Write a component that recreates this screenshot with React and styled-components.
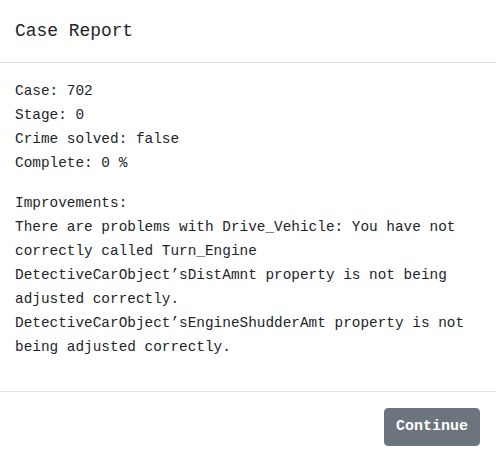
import React from "react";
import styled, { createGlobalStyle } from "styled-components";

const Global = createGlobalStyle`
  html, body { margin: 0; padding: 0; background: #fff; }
  body {
    font-family: "Liberation Mono", "Courier New", monospace;
    color: #212529;
    -webkit-font-smoothing: antialiased;
  }
  * { box-sizing: border-box; }
`;

const Modal = styled.div`
  width: 496px;
  background: #fff;
  display: flex;
  flex-direction: column;
`;

const Header = styled.div`
  padding: 16px 15px;
  border-bottom: 1px solid #dee2e6;
  display: flex;
  align-items: center;
`;

const Title = styled.h5`
  margin: 0;
  font-size: 17.9px;
  line-height: 30px;
  font-weight: 400;
  color: #212529;
`;

const Body = styled.div`
  padding: 16px 15px;
`;

const Para = styled.p`
  margin: 0 0 16px;
  font-size: 14.4px;
  line-height: 24px;
  color: #212529;
`;

const Line = styled.span`
  display: block;
`;

const Footer = styled.div`
  border-top: 1px solid #dee2e6;
  padding: 12px;
  display: flex;
  justify-content: flex-end;
`;

const Button = styled.button`
  margin: 4px;
  width: 96px;
  height: 38px;
  border: 1px solid #6c757d;
  border-radius: 4px;
  background: #6c757d;
  color: #fff;
  font-family: "Liberation Mono", "Courier New", monospace;
  font-size: 15px;
  font-weight: 700;
  line-height: 24px;
  padding: 0;
  cursor: pointer;
`;

export default function App() {
  return (
    <>
      <Global />
      <Modal>
        <Header>
          <Title>Case Report</Title>
        </Header>
        <Body>
          <Para>
            <Line>Case: 702</Line>
            <Line>Stage: 0</Line>
            <Line>Crime solved: false</Line>
            <Line>Complete: 0 %</Line>
          </Para>
          <Para>
            <Line>Improvements:</Line>
            <Line>There are problems with Drive_Vehicle: You have not correctly called Turn_Engine</Line>
            <Line>DetectiveCarObject’sDistAmnt property is not being adjusted correctly.</Line>
            <Line>DetectiveCarObject’sEngineShudderAmt property is not being adjusted correctly.</Line>
          </Para>
        </Body>
        <Footer>
          <Button>Continue</Button>
        </Footer>
      </Modal>
    </>
  );
}
